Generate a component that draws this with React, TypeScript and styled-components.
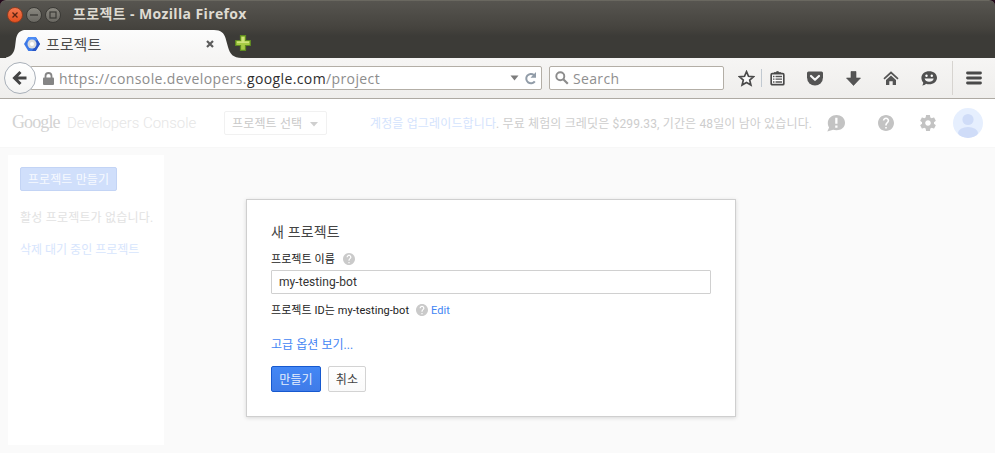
import React from "react";
import styled, { createGlobalStyle } from "styled-components";

const Global = createGlobalStyle`
  *, *::before, *::after { box-sizing: border-box; }
  html, body, #root { margin: 0; padding: 0; }
  body { background: #fafafa; overflow: hidden; }
  svg { display: block; flex: none; }
`;

const chrome = `"Open Sans", "Noto Sans CJK KR", sans-serif`;
const web = `Roboto, "Noto Sans CJK KR", sans-serif`;

const Window = styled.div`
  width: 995px;
  height: 453px;
  display: flex;
  flex-direction: column;
  background: #240a1c;
  overflow: hidden;
`;

/* ---------- Browser frame ---------- */
const TitleBar = styled.div`
  height: 28px;
  flex: none;
  display: flex;
  align-items: center;
  padding-left: 7px;
  gap: 3px;
  border-radius: 6px 6px 0 0;
  border-top: 1px solid #6a6860;
  background: linear-gradient(#575550, #45433e);
`;
const WinButton = styled.div<{ $close?: boolean }>`
  width: 16px;
  height: 16px;
  border-radius: 50%;
  display: flex;
  align-items: center;
  justify-content: center;
  border: 1px solid ${(p) => (p.$close ? "#8f3d20" : "#3b3a36")};
  background: ${(p) => (p.$close ? "linear-gradient(#f3774f, #e4501f)" : "linear-gradient(#8a8880, #6a6862)")};
`;
const WinTitle = styled.div`
  margin-left: 9px;
  margin-top: -2px;
  font: 700 14px/28px ${chrome};
  color: #dfdbd2;
  letter-spacing: 0.37px;
  white-space: pre;
`;

const TabStrip = styled.div`
  height: 30px;
  flex: none;
  display: flex;
  align-items: flex-end;
  padding-left: 6px;
  background: linear-gradient(#45433e, #3c3b37 8px);
`;
const TabBody = styled.div`
  width: 190px;
  height: 28px;
  display: flex;
  align-items: center;
  background: linear-gradient(#fcfcfc, #f6f5f4);
`;
const TabTitle = styled.div`
  margin-left: 6px;
  flex: 1;
  font: 400 15px/28px ${chrome};
  color: #4c4c4c;
`;
const NewTab = styled.div`
  align-self: center;
  margin: 0 0 0 -7px;
`;

const ToolBar = styled.div`
  height: 41px;
  flex: none;
  display: flex;
  align-items: center;
  background: linear-gradient(#f6f5f4, #efeeec);
  border-bottom: 1px solid #aeaaa3;
`;
const BackButton = styled.div`
  width: 32px;
  height: 32px;
  margin-left: 4px;
  flex: none;
  border-radius: 50%;
  border: 1px solid #a9b0b9;
  background: linear-gradient(#ffffff, #f4f4f3);
  display: flex;
  align-items: center;
  justify-content: center;
  z-index: 1;
`;
const Field = styled.div<{ $w: number; $gap: number; $pad: number }>`
  width: ${(p) => p.$w}px;
  height: 24px;
  flex: none;
  margin-left: ${(p) => p.$gap}px;
  padding-left: ${(p) => p.$pad}px;
  display: flex;
  align-items: center;
  background: #fff;
  border: 1px solid #b3aea6;
  border-radius: 2px;
`;
const Url = styled.div`
  margin-left: 5px;
  padding-top: 2px;
  flex: 1;
  font: 400 14px/22px ${chrome};
  color: #8d8d8d;
  letter-spacing: 0.39px;
  white-space: pre;
  b { font-weight: 400; color: #2e2e2e; }
`;
const SearchText = styled.div`
  margin-left: 4px;
  padding-top: 2px;
  font: 400 14px/22px ${chrome};
  letter-spacing: 0.35px;
  color: #8f8f8f;
`;
const ToolIcons = styled.div`
  display: grid;
  grid-template-columns: 30px 1px 30px 46px 30px 46px 30px 16px 28px;
  margin-left: 7px;
  height: 40px;
  align-items: center;
  justify-items: center;
`;
const Separator = styled.div<{ $h: number; $c: string }>`
  width: 1px;
  height: ${(p) => p.$h}px;
  background: ${(p) => p.$c};
`;

/* ---------- Console page ---------- */
const Page = styled.div`
  position: relative;
  flex: 1;
  background: #fafafa;
`;
const Header = styled.header`
  height: 49px;
  display: flex;
  align-items: center;
  padding-left: 12px;
  background: #fff;
  border-bottom: 1px solid #f7f7f7;
`;
const Google = styled.span`
  width: 55px;
  padding-bottom: 3px;
  font: 400 18px/24px "Liberation Serif", serif;
  color: #d3d3d3;
  letter-spacing: -0.9px;
`;
const Product = styled.span`
  width: 157px;
  padding-bottom: 1px;
  font: 300 15px/24px ${web};
  color: #e6e6e6;
  letter-spacing: -0.05px;
  white-space: pre;
`;
const Picker = styled.div`
  width: 103px;
  height: 24px;
  display: flex;
  align-items: center;
  padding: 2px 8px 0 7px;
  justify-content: space-between;
  border: 1px solid #f1f1f1;
  border-radius: 2px;
  font: 400 12px/22px ${web};
  letter-spacing: 0.15px;
  color: #c9c9c9;
  white-space: nowrap;
`;
const Notice = styled.div`
  width: 500px;
  padding: 2px 0 0 43px;
  font: 400 12px/24px ${web};
  letter-spacing: 0.14px;
  color: #cdcdcd;
  white-space: pre;
  a { color: #d4e3fd; }
`;
const HeaderIcons = styled.div`
  display: grid;
  grid-template-columns: 51px 42px 33px 30px;
  align-items: center;
`;
const Sidebar = styled.aside`
  width: 156px;
  height: 290px;
  margin: 7px 0 0 8px;
  padding: 12px;
  background: #fff;
`;
const SideText = styled.div<{ $link?: boolean }>`
  margin-top: ${(p) => (p.$link ? 12 : 17)}px;
  font: 400 12px/20px ${web};
  letter-spacing: ${(p) => (p.$link ? 0 : 0.2)}px;
  color: ${(p) => (p.$link ? "#d7e5fd" : "#e2e2e2")};
  white-space: nowrap;
`;
const Button = styled.button<{ $kind: "primary" | "plain" | "faded" }>`
  display: block;
  height: ${(p) => (p.$kind === "faded" ? 24 : 26)}px;
  width: ${(p) => ({ primary: 50, plain: 38, faded: 97 })[p.$kind]}px;
  padding: 2px 0 0;
  border-radius: 2px;
  font: 400 12px/20px ${web};
  letter-spacing: 0.15px;
  white-space: nowrap;
  border: 1px solid ${(p) => ({ primary: "#1659cf", plain: "#d3d3d3", faded: "#c3d4f5" })[p.$kind]};
  background: ${(p) =>
    ({ primary: "linear-gradient(#4387f5, #3f7be8)", plain: "linear-gradient(#ffffff, #fafafa)", faded: "#d0dffb" })[p.$kind]};
  color: ${(p) => ({ primary: "#e6effd", plain: "#444444", faded: "#f7faff" })[p.$kind]};
`;

const Dialog = styled.section`
  position: absolute;
  left: 246px;
  top: 100px;
  width: 490px;
  height: 218px;
  padding: 22px 24px;
  background: #fff;
  border: 1px solid #cfcfcf;
  box-shadow: 0 1px 4px rgba(0, 0, 0, 0.14);
  font: 400 12px/16px ${web};
  color: #222;
`;
const Heading = styled.h1`
  margin: 0;
  font: 400 14px/20px ${web};
  letter-spacing: 0.15px;
  color: #444;
`;
const Line = styled.div<{ $top: number; $size: number }>`
  margin-top: ${(p) => p.$top}px;
  height: 16px;
  display: flex;
  align-items: center;
  font-size: ${(p) => p.$size}px;
  letter-spacing: 0.05px;
  white-space: pre;
`;
const LineText = styled.span`
  padding-top: 2px;
`;
const IconSlot = styled.span<{ $l: number; $r: number }>`
  margin: 0 ${(p) => p.$r}px 0 ${(p) => p.$l}px;
`;
const NameInput = styled.input`
  display: block;
  width: 440px;
  height: 24px;
  margin-top: 3px;
  padding: 0 7px;
  border: 1px solid #d0d0d0;
  border-radius: 1px;
  font: 400 12px/22px ${web};
  letter-spacing: 0.06px;
  color: #333;
  outline: none;
`;
const Link = styled.a`
  padding-top: 2px;
  color: #4285f4;
`;
const Actions = styled.div`
  display: flex;
  gap: 7px;
  margin-top: 14px;
`;

const helpPath =
  "M12 2C6.48 2 2 6.48 2 12s4.48 10 10 10 10-4.48 10-10S17.52 2 12 2zm1 17h-2v-2h2v2zm2.07-7.75l-.9.92C13.45 12.9 13 13.5 13 15h-2v-.5c0-1.1.45-2.1 1.17-2.83l1.24-1.26c.37-.36.59-.86.59-1.41 0-1.1-.9-2-2-2s-2 .9-2 2H8c0-2.21 1.79-4 4-4s4 1.79 4 4c0 .88-.36 1.68-.93 2.25z";
const gearPath =
  "M19.43 12.98c.04-.32.07-.64.07-.98s-.03-.66-.07-.98l2.11-1.65c.19-.15.24-.42.12-.64l-2-3.46c-.12-.22-.39-.3-.61-.22l-2.49 1c-.52-.4-1.08-.73-1.69-.98l-.38-2.65C14.46 2.18 14.25 2 14 2h-4c-.25 0-.46.18-.49.42l-.38 2.65c-.61.25-1.17.59-1.69.98l-2.49-1c-.23-.09-.49 0-.61.22l-2 3.46c-.13.22-.07.49.12.64l2.11 1.65c-.04.32-.07.65-.07.98s.03.66.07.98l-2.11 1.65c-.19.15-.24.42-.12.64l2 3.46c.12.22.39.3.61.22l2.49-1c.52.4 1.08.73 1.69.98l.38 2.65c.03.24.24.42.49.42h4c.25 0 .46-.18.49-.42l.38-2.65c.61-.25 1.17-.59 1.69-.98l2.49 1c.23.09.49 0 .61-.22l2-3.46c.12-.22.07-.49-.12-.64l-2.11-1.65zM12 15.5c-1.93 0-3.5-1.57-3.5-3.5s1.57-3.5 3.5-3.5 3.5 1.57 3.5 3.5-1.57 3.5-3.5 3.5z";

const HelpIcon = ({ size, color }: { size: number; color: string }) => (
  <svg width={size} height={size} viewBox="2 2 20 20"><path fill={color} d={helpPath} /></svg>
);

export default function App() {
  return (
    <>
      <Global />
      <Window>
        <TitleBar>
          <WinButton $close>
            <svg width="6" height="6" viewBox="0 0 6 6"><path d="M.5.5l5 5m0-5l-5 5" stroke="#5a2413" strokeWidth="1.3" /></svg>
          </WinButton>
          <WinButton>
            <svg width="8" height="2" viewBox="0 0 8 2"><path d="M0 1h8" stroke="#3a3935" strokeWidth="1.3" /></svg>
          </WinButton>
          <WinButton>
            <svg width="8" height="8" viewBox="0 0 8 8"><rect x="1" y="1" width="6" height="6" fill="none" stroke="#3a3935" strokeWidth="1.2" /></svg>
          </WinButton>
          <WinTitle>프로젝트 - Mozilla Firefox</WinTitle>
        </TitleBar>

        <TabStrip>
          <svg width="18" height="28" viewBox="0 0 18 28">
            <defs><linearGradient id="tab" x1="0" y1="0" x2="0" y2="1"><stop stopColor="#fcfcfc" /><stop offset="1" stopColor="#f6f5f4" /></linearGradient></defs>
            <path d="M18 0C13 1 11 4 10 9L9 17C8 24 4 28 -4 28H18z" fill="url(#tab)" />
          </svg>
          <TabBody>
            <svg width="16" height="16" viewBox="0 0 16 16">
              <path d="M4.3 1h7.4L16 8l-4.3 7H4.3L0 8z" fill="#3b78e7" />
              <path d="M8 1h3.7L16 8l-4.3 7H8l4-7z" fill="#2a56c6" />
              <path d="M4.3 1h7.4l2 3.2L8 5 2.300 4.300z" fill="#4d8cf5" />
              <circle cx="8" cy="8" r="4.500" fill="#dcdcdc" />
              <circle cx="8" cy="8" r="2" fill="#fff" />
            </svg>
            <TabTitle>프로젝트</TabTitle>
            <svg width="8" height="8" viewBox="0 0 8 8"><path d="M1 1l6 6m0-6L1 7" stroke="#5c5c5c" strokeWidth="2.200" /></svg>
          </TabBody>
          <svg width="28" height="28" viewBox="0 0 28 28">
            <path d="M0 28V0C7 0 10 3 11.500 8L14 17C16 24 19 28 28 28z" fill="url(#tab)" />
          </svg>
          <NewTab>
            <svg width="16" height="16" viewBox="0 0 16 16">
              <path d="M5.500 .7h5v4.800h4.800v5h-4.800v4.800h-5v-4.800H.7v-5h4.800z" fill="#a7cb45" stroke="#5f8b21" strokeWidth="1.200" />
              <path d="M6.600 2h2.800v4.600H14v1.400H2V6.600h4.600z" fill="#cfe37b" />
            </svg>
          </NewTab>
        </TabStrip>

        <ToolBar>
          <BackButton>
            <svg width="16" height="16" viewBox="0 0 16 16"><path d="M8.500 2L2.500 8l6 6M3 8h11.500" fill="none" stroke="#444" strokeWidth="3" /></svg>
          </BackButton>
          <Field $w={512} $gap={-6} $pad={12}>
            <svg width="11" height="13" viewBox="0 0 11 13">
              <path d="M2.500 6V4a3 3 0 016 0v2" fill="none" stroke="#858585" strokeWidth="1.800" />
              <rect y="5.500" width="11" height="7.500" rx="1" fill="#858585" />
            </svg>
            <Url>https://console.developers.<b>google.com</b>/project</Url>
            <svg width="9" height="6" viewBox="0 0 9 6"><path d="M.5.5h8l-4 5z" fill="#7d7d7d" /></svg>
            <IconSlot $l={5} $r={4}>
              <svg width="13" height="13" viewBox="0 0 13 13">
                <path d="M10.800 9.300A4.700 4.700 0 1 1 10 3" fill="none" stroke="#919ca8" strokeWidth="2" />
                <path d="M12 0v5.800H6.500z" fill="#919ca8" />
              </svg>
            </IconSlot>
          </Field>
          <Field $w={175} $gap={7} $pad={5}>
            <svg width="14" height="14" viewBox="0 0 14 14">
              <circle cx="5.300" cy="5.300" r="4" fill="none" stroke="#8c8c8c" strokeWidth="1.900" />
              <path d="M8.300 8.300l4.500 4.500" stroke="#8c8c8c" strokeWidth="2.200" />
            </svg>
            <SearchText>Search</SearchText>
          </Field>
          <ToolIcons>
            <svg width="17" height="17" viewBox="0 0 17 17"><path d="M8.500 1.700l2 4.600 5 .5-3.800 3.300 1.200 4.900-4.400-2.600L4.100 15l1.200-4.900L1.500 6.800l5-.5z" fill="#fafafa" stroke="#494949" strokeWidth="1.700" /></svg>
            <Separator $h={18} $c="#c1c9d1" />
            <svg width="15" height="16" viewBox="0 0 15 16">
              <path d="M4 4V2.800h1.800a1.800 1.800 0 013.400 0H11V4" fill="#555" stroke="#494949" />
              <rect x="1.200" y="3.700" width="12.600" height="11" rx="1" fill="#fff" stroke="#494949" strokeWidth="1.700" />
              <path d="M3 6.500h1.500m1 0H12M3 9.200h1.500m1 0H12M3 12h1.500m1 0H12" stroke="#555" strokeWidth="1.300" />
            </svg>
            <svg width="16" height="15" viewBox="0 0 16 15">
              <path d="M1.500.5h13Q16 .5 16 2v4.500a8 8 0 01-16 0V2Q0 .5 1.500.5z" fill="#545454" />
              <path d="M4 5l4 3.800L12 5" fill="none" stroke="#f7f7f7" strokeWidth="2.200" strokeLinecap="round" strokeLinejoin="round" />
            </svg>
            <svg width="15" height="15" viewBox="0 0 15 15"><path d="M5 .5h5V7h4.500l-7 7.500L.5 7H5z" fill="#555" stroke="#4a4a4a" strokeWidth=".6" /></svg>
            <svg width="16" height="15" viewBox="0 0 16 15">
              <path d="M1 7.800L8 1.500l7 6.300" fill="none" stroke="#555" strokeWidth="1.700" />
              <path d="M3 9L8 4.600l5 4.400v5H9.700v-3.800H6.300V14H3z" fill="#555" />
            </svg>
            <svg width="16" height="15" viewBox="0 0 16 15">
              <path d="M8.200.3C12.600.3 16 3 16 6.800s-3.400 6.500-7.800 6.500c-1.200 0-2.200-.2-3.200-.6-.8.900-2.200 1.600-4 1.800.8-.8 1.300-1.900 1.200-3.100C1 10.200.4 8.600.4 6.800.4 3 3.800.3 8.200.3z" fill="#505050" />
              <circle cx="5.500" cy="4.800" r="1.200" fill="#fff" /><circle cx="10.800" cy="4.800" r="1.200" fill="#fff" />
              <path d="M3.600 7.600h9.100c-.5 2.100-2.200 3.200-4.500 3.200s-4.100-1.100-4.600-3.200z" fill="#f3f3f3" />
            </svg>
            <Separator $h={34} $c="#d7d4d0" />
            <svg width="16" height="14" viewBox="0 0 16 14"><path d="M1.500 2h13m-13 5h13m-13 5h13" stroke="#494949" strokeWidth="2.800" strokeLinecap="round" /></svg>
          </ToolIcons>
        </ToolBar>

        <Page>
          <Header>
            <Google>Google</Google>
            <Product>Developers Console</Product>
            <Picker>
              프로젝트 선택
              <svg width="8" height="5" viewBox="0 0 8 5"><path d="M0 0h8L4 4.500z" fill="#cfcfcf" /></svg>
            </Picker>
            <Notice><a>계정을 업그레이드합니다</a>. 무료 체험의 크레딧은 $299.33, 기간은 48일이 남아 있습니다.</Notice>
            <HeaderIcons>
              <svg width="18" height="18" viewBox="0 0 18 18">
                <path d="M9.500 1C14 1 18 4 18 8.800s-4 7.500-8.500 7.500c-1.300 0-2.400-.2-3.400-.5L.3 17.500l1.800-4C1.300 12.200.8 10.700.8 9 .8 4 5 1 9.500 1z" fill="#c3c3c3" />
                <path d="M8.200 3.800h2.300v6H8.200zm0 7.700h2.300v2.200H8.200z" fill="#fff" />
              </svg>
              <HelpIcon size={16} color="#c3c3c3" />
              <svg width="16" height="16" viewBox="2 2 20 20"><path fill="#c3c3c3" d={gearPath} /></svg>
              <svg width="30" height="30" viewBox="0 0 30 30">
                <defs><clipPath id="face"><circle cx="15" cy="15" r="15" /></clipPath></defs>
                <g clipPath="url(#face)"><rect width="30" height="30" fill="#e6effe" /><circle cx="15" cy="11.500" r="5.600" fill="#cfdcf8" /><ellipse cx="15" cy="25" rx="10" ry="6" fill="#cfdcf8" /></g>
              </svg>
            </HeaderIcons>
          </Header>
          <Sidebar>
            <Button $kind="faded">프로젝트 만들기</Button>
            <SideText>활성 프로젝트가 없습니다.</SideText>
            <SideText $link>삭제 대기 중인 프로젝트</SideText>
          </Sidebar>

          <Dialog>
            <Heading>새 프로젝트</Heading>
            <Line $top={9} $size={11}><LineText>프로젝트 이름</LineText><IconSlot $l={8} $r={0}><HelpIcon size={12} color="#cacaca" /></IconSlot></Line>
            <NameInput defaultValue="my-testing-bot" />
            <Line $top={8} $size={11}><LineText>프로젝트 ID는 my-testing-bot</LineText><IconSlot $l={7} $r={3}><HelpIcon size={12} color="#cacaca" /></IconSlot><Link>Edit</Link></Line>
            <Line $top={18} $size={12}><Link>고급 옵션 보기...</Link></Line>
            <Actions>
              <Button $kind="primary">만들기</Button>
              <Button $kind="plain">취소</Button>
            </Actions>
          </Dialog>
        </Page>
      </Window>
    </>
  );
}
